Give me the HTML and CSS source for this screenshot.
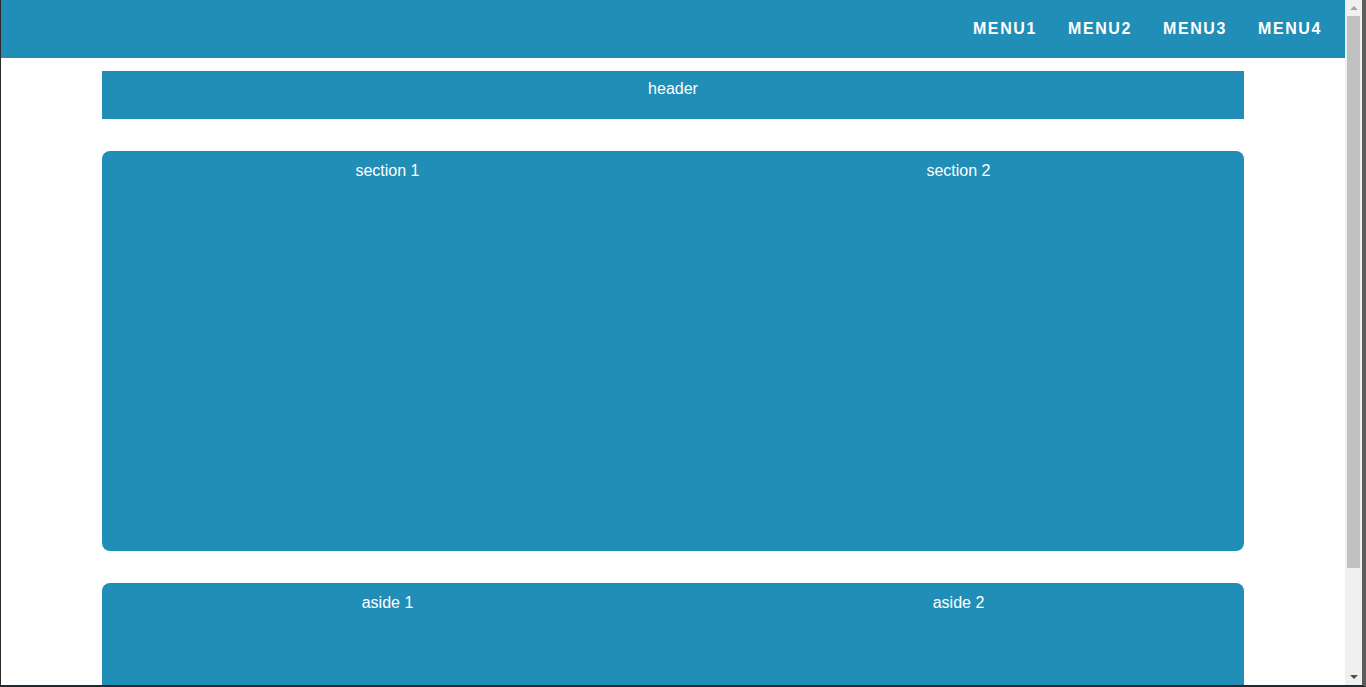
FILE: index.html
```html
<!DOCTYPE html>
<html lang="en">
<head>
<meta charset="utf-8">
<title>Layout</title>
<link rel="stylesheet" href="styles.css">
</head>
<body>
<div class="window">
  <div class="viewport">
    <nav class="topnav">
      <ul class="menu">
        <li><a href="#">MENU1</a></li>
        <li><a href="#">MENU2</a></li>
        <li><a href="#">MENU3</a></li>
        <li><a href="#">MENU4</a></li>
      </ul>
    </nav>
    <div class="container">
      <header class="box header">header</header>
      <main class="box row sections">
        <section class="col">section 1</section>
        <section class="col">section 2</section>
      </main>
      <div class="box row asides">
        <aside class="col">aside 1</aside>
        <aside class="col">aside 2</aside>
      </div>
    </div>
  </div>
  <div class="scrollbar" aria-hidden="true">
    <div class="sb-btn"><span class="tri-up"></span></div>
    <div class="sb-thumb"></div>
    <div class="sb-track"></div>
    <div class="sb-btn sb-btn-down"><span class="tri-down"></span></div>
  </div>
</div>
</body>
</html>
```
FILE: styles.css
```css
html, body {
  margin: 0;
  padding: 0;
  height: 100%;
  background: #ffffff;
}
body {
  font-family: "Liberation Sans", Arial, sans-serif;
  font-size: 16px;
  color: #ffffff;
  overflow: hidden;
}
.window {
  box-sizing: border-box;
  height: 100vh;
  display: flex;
  border-left: 1px solid #2b2b2b;
  border-right: 4px solid #5c5c5c;
  border-bottom: 2px solid #1e2a31;
}
.viewport {
  flex: 1;
  overflow: hidden;
  background: #ffffff;
}
.topnav {
  background: #208eb7;
  height: 58px;
  display: flex;
  justify-content: flex-end;
  align-items: center;
  padding-right: 23px;
}
.menu {
  list-style: none;
  margin: 0;
  padding: 0;
  display: flex;
  gap: 31px;
}
.menu a {
  color: #ffffff;
  text-decoration: none;
  font-weight: bold;
  font-size: 16px;
  letter-spacing: 1.6px;
}
.container {
  width: 1142px;
  margin: 13px auto 0;
  display: flex;
  flex-direction: column;
  gap: 32px;
}
.box {
  background: #208eb7;
}
.header {
  height: 48px;
  box-sizing: border-box;
  padding-top: 9px;
  text-align: center;
}
.row {
  display: grid;
  grid-template-columns: 1fr 1fr;
  border-radius: 8px;
}
.sections {
  height: 400px;
}
.asides {
  height: 400px;
}
.col {
  text-align: center;
  padding-top: 11px;
}
.scrollbar {
  width: 17px;
  flex: none;
  background: #f0f0f0;
  display: flex;
  flex-direction: column;
}
.sb-btn {
  height: 16px;
  display: flex;
  align-items: center;
  justify-content: center;
  flex: none;
}
.sb-btn-down {
  height: 17px;
}
.sb-thumb {
  height: 552px;
  margin: 0 2px;
  background: #c1c1c1;
  flex: none;
}
.sb-track {
  flex: 1;
}
.tri-up {
  width: 0;
  height: 0;
  border-left: 4px solid transparent;
  border-right: 4px solid transparent;
  border-bottom: 4px solid #a3a3a3;
}
.tri-down {
  width: 0;
  height: 0;
  border-left: 4px solid transparent;
  border-right: 4px solid transparent;
  border-top: 4px solid #505050;
}
```
